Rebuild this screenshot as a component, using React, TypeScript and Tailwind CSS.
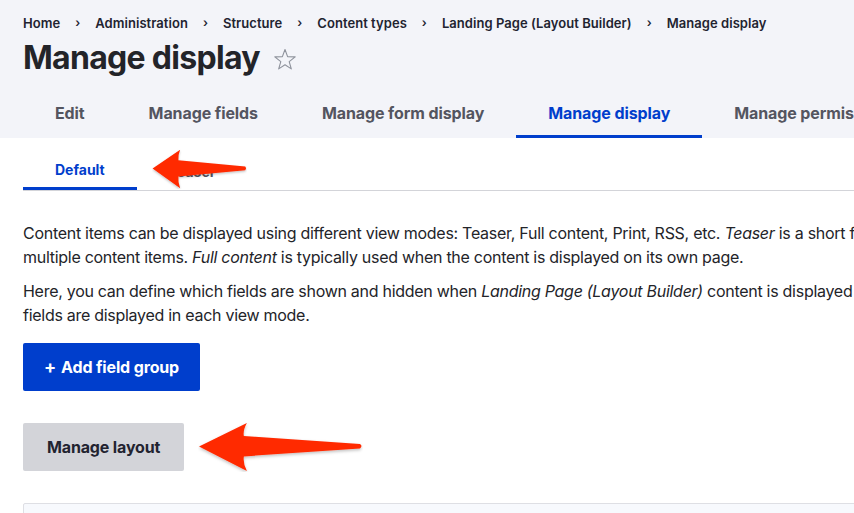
import React from "react"

const crumbs = ["Home", "Administration", "Structure", "Content types", "Landing Page (Layout Builder)", "Manage display"]

const tabs = [
  { label: "Edit", active: false },
  { label: "Manage fields", active: false },
  { label: "Manage form display", active: false },
  { label: "Manage display", active: true },
  { label: "Manage permissions", active: false },
]

function Arrow({ className, w, h }: { className: string; w: number; h: number }) {
  // left-pointing callout arrow, drawn in a 162x48 box and stretched
  return (
    <svg className={className} width={w} height={h} viewBox="0 0 162 48" preserveAspectRatio="none">
      <defs>
        <filter id="sh" x="-10%" y="-20%" width="120%" height="150%">
          <feDropShadow dx="0" dy="1.5" stdDeviation="1.5" floodColor="#000" floodOpacity="0.25" />
        </filter>
      </defs>
      <path
        d="M1 23.5 L48 1 Q44 8 45 13.5 L159 21 Q162 23 159 25.5 L45 33 Q44 40 48 47 Z"
        fill="#ff2a00"
        filter="url(#sh)"
      />
    </svg>
  )
}

export default function App() {
  return (
    <div className="relative h-[513px] w-full overflow-hidden bg-white text-[#232429] font-['Inter',sans-serif]">
      {/* Page header */}
      <div className="bg-[#f3f4f9] pt-[14px]">
        <nav className="flex items-center gap-[15px] whitespace-nowrap px-[23px] text-[13px] font-semibold leading-[18px] tracking-[0.05px] text-[#222330]">
          {crumbs.map((c, i) => (
            <React.Fragment key={c}>
              {i > 0 && <span className="text-[12px]">›</span>}
              <span>{c}</span>
            </React.Fragment>
          ))}
        </nav>
        <div className="mt-[7px] flex items-center gap-[13px] px-[23px]">
          <h1 className="text-[32px] font-bold leading-[38px] tracking-[-0.7px] text-[#232429]">Manage display</h1>
          <svg width="24" height="23" viewBox="0 0 24 23" className="mt-[3px]">
            <path
              d="M12 1.5 L14.6 8.6 L22.2 8.9 L16.2 13.6 L18.3 20.9 L12 16.7 L5.7 20.9 L7.8 13.6 L1.8 8.9 L9.4 8.6 Z"
              fill="none"
              stroke="#8e929c"
              strokeWidth="1.1"
              strokeLinejoin="round"
            />
          </svg>
        </div>
        <div className="mt-[13px] flex whitespace-nowrap px-[23px] tracking-[-0.1px]">
          {tabs.map((t) => (
            <div
              key={t.label}
              className={
                t.active
                  ? "flex h-[48px] items-center border-b-[3px] border-[#003ecc] px-8 pt-[1px] text-[16px] font-bold text-[#003ecc]"
                  : "flex h-[48px] items-center border-b-[3px] border-transparent px-8 pt-[1px] text-[16px] font-bold text-[#545560]"
              }
            >
              {t.label}
            </div>
          ))}
        </div>
      </div>

      {/* Body */}
      <div className="pl-[23px] pt-[14px]">
        <div className="flex border-b border-[#d3d4d9] whitespace-nowrap">
          <div className="-mb-px flex h-[38px] items-center border-b-[3px] border-[#003ecc] px-8 text-[14px] font-bold text-[#003ecc]">
            Default
          </div>
          <div className="flex h-[38px] items-center px-8 text-[14px] font-bold text-[#545560]">Teaser</div>
        </div>

        <p className="mt-[30px] whitespace-nowrap text-[16px] leading-[24px] tracking-[-0.28px]">
          Content items can be displayed using different view modes: Teaser, Full content, Print, RSS, etc. <em>Teaser</em> is a short format that is typically used in lists of
          <br />
          multiple content items. <em>Full content</em> is typically used when the content is displayed on its own page.
        </p>
        <p className="mt-[10px] whitespace-nowrap text-[16px] leading-[24px] tracking-[-0.28px]">
          Here, you can define which fields are shown and hidden when <em>Landing Page (Layout Builder)</em> content is displayed in each view mode, and define how the
          <br />
          fields are displayed in each view mode.
        </p>

        <button className="mt-[16px] flex h-[48px] items-center rounded-[2px] bg-[#003ecc] px-[21px] text-[16px] font-bold tracking-[-0.15px] text-white">
          <span className="mr-[5px] text-[18px] leading-none">+</span>Add field group
        </button>

        <button className="mt-[32px] flex h-[48px] items-center rounded-[2px] bg-[#d3d4d9] px-6 text-[16px] font-bold tracking-[-0.15px] text-[#222330]">
          Manage layout
        </button>

        <div className="mt-[32px] h-[40px] w-[1200px] rounded-t-[2px] border border-[#dedfe4] bg-[#f7f9fd]" />
      </div>

      {/* Annotation arrows */}
      <Arrow className="absolute left-[152px] top-[149px]" w={95} h={40} />
      <Arrow className="absolute left-[198px] top-[422px]" w={165} h={50} />
    </div>
  )
}
